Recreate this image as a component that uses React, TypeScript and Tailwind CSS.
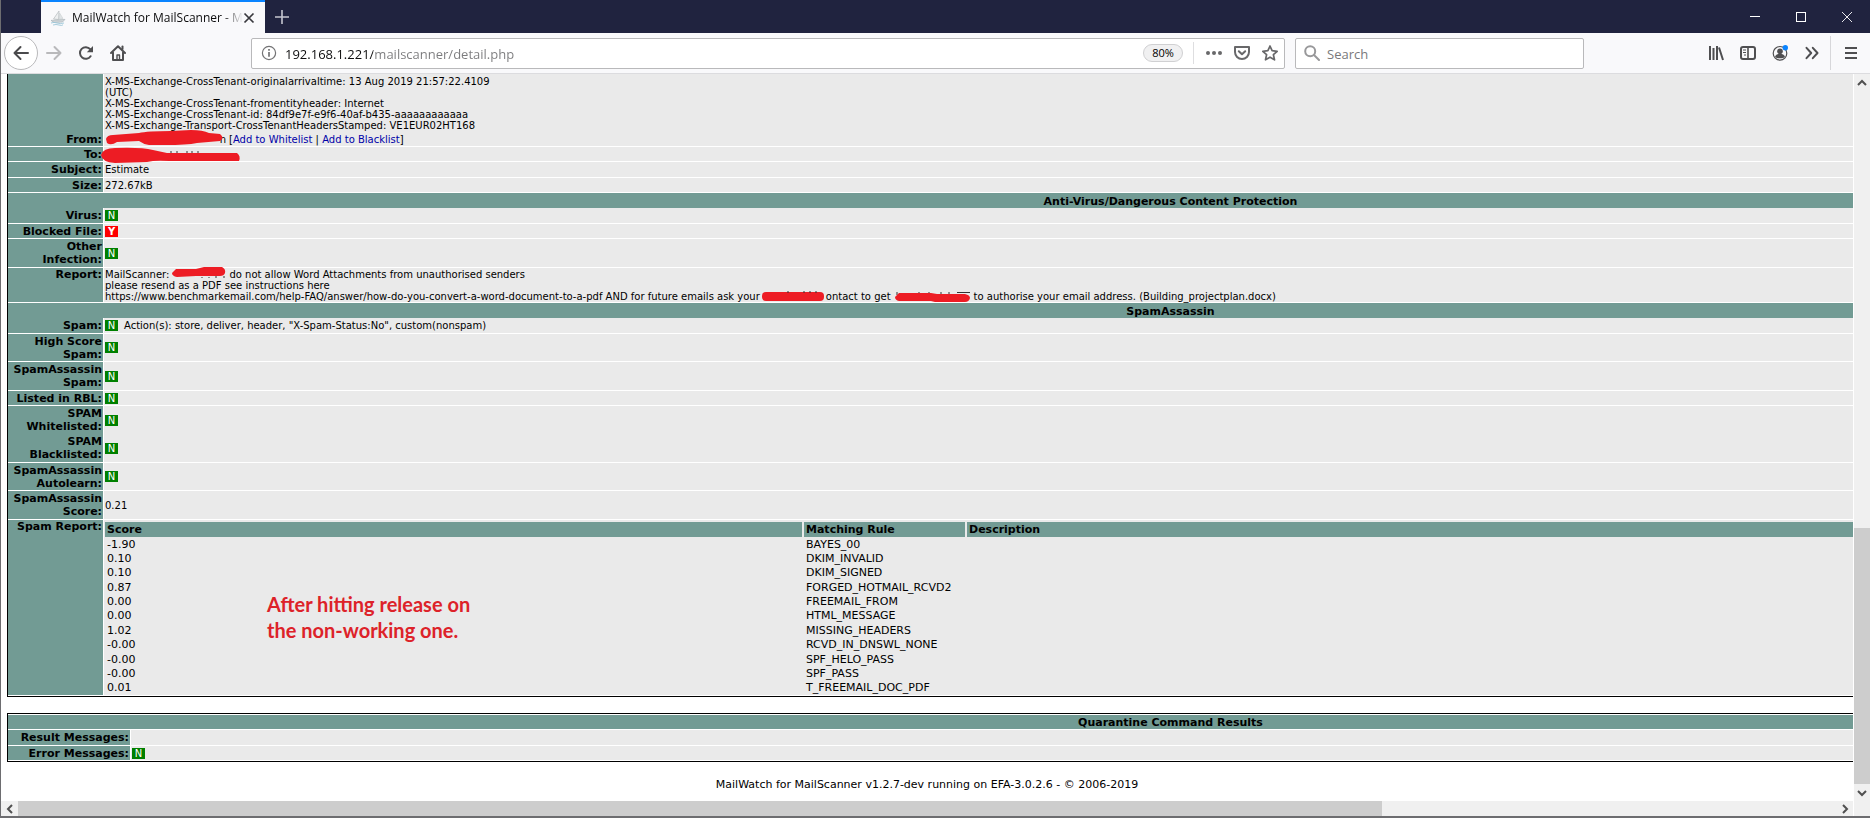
import type { ReactNode } from "react";

const reportRules = [
  ["-1.90", "BAYES_00"],
  ["0.10", "DKIM_INVALID"],
  ["0.10", "DKIM_SIGNED"],
  ["0.87", "FORGED_HOTMAIL_RCVD2"],
  ["0.00", "FREEMAIL_FROM"],
  ["0.00", "HTML_MESSAGE"],
  ["1.02", "MISSING_HEADERS"],
  ["-0.00", "RCVD_IN_DNSWL_NONE"],
  ["-0.00", "SPF_HELO_PASS"],
  ["-0.00", "SPF_PASS"],
  ["0.01", "T_FREEMAIL_DOC_PDF"],
];

function Flag({ yes = false }: { yes?: boolean }) {
  return (
    <span
      className={`inline-block h-[11px] w-[13px] text-center align-middle text-[10px] leading-[11px] text-white ${
        yes ? "bg-[#ff0000] font-bold" : "bg-[#008000]"
      }`}
    >
      {yes ? "Y" : "N"}
    </span>
  );
}

function Row({
  label,
  height,
  top = false,
  line = true,
  children,
}: {
  label: string;
  height: string;
  top?: boolean;
  line?: boolean;
  children?: ReactNode;
}) {
  const edge = line ? "border-b border-white" : "";
  return (
    <tr className={height}>
      <th
        scope="row"
        className={`bg-[#729b94] p-0 pr-px text-right text-[11px] leading-[13px] font-bold ${edge} ${top ? "align-top" : "align-middle"}`}
      >
        {label}
      </th>
      <td className={`border-l border-l-white bg-[#eaeaea] p-0 pl-px align-middle whitespace-nowrap ${edge}`}>{children}</td>
    </tr>
  );
}

function SectionRow({ title }: { title: string }) {
  return (
    <tr className="h-[15px]">
      <th colSpan={2} className="bg-[#729b94] p-0 pt-0.5 text-center text-[11px] leading-[13px] font-bold">
        {title}
      </th>
    </tr>
  );
}

function ToolButton({ label, className = "w-8", children }: { label: string; className?: string; children: ReactNode }) {
  return (
    <button type="button" aria-label={label} className={`flex h-8 shrink-0 items-center justify-center text-[#4f4f51] ${className}`}>
      {children}
    </button>
  );
}

function Chevron({ d }: { d: string }) {
  return (
    <svg viewBox="0 0 10 10" className="size-[10px] fill-none stroke-[#505050]" strokeWidth={2}>
      <path d={d} />
    </svg>
  );
}

function TabStrip() {
  return (
    <header className="flex h-[33px] items-stretch bg-[#20233f] pl-10">
      <div className="flex w-[224px] items-center border-t-2 border-[#0a84ff] bg-[#f9f9fb] pr-[10px] pl-[9px]">
        <svg viewBox="0 0 16 16" className="size-4 shrink-0" fill="none">
          <path d="M9 1 L8.5 9.5 L3.5 9 Z" fill="#eef0f1" stroke="#b4babd" strokeWidth=".7" />
          <path d="M9.6 3 L13 8.5 L9.4 9.4 Z" fill="#e0e4e6" stroke="#c3c8cb" strokeWidth=".5" />
          <path d="M1 10.4 L15 9.4 L12.5 12 L4 12.5 Z" fill="#cfd5d8" stroke="#a3adb2" strokeWidth=".6" />
          <path d="M1 13 Q4 11.8 7 13 T14 13 M3 15 Q6 14 9 15 T13 14.8" stroke="#9cc6d8" strokeWidth=".9" />
        </svg>
        <span className="ml-1.5 min-w-0 flex-1 overflow-hidden mask-r-from-88% text-[12px] leading-4 whitespace-nowrap text-[#0c0c0d]">
          MailWatch for MailScanner - M
        </span>
        <button type="button" aria-label="Close tab" className="flex size-3 items-center justify-center">
          <svg viewBox="0 0 12 12" className="size-3 fill-none stroke-[#38383d]" strokeWidth={1.7}>
            <path d="M1.5 1.5 L10.5 10.5 M10.5 1.5 L1.5 10.5" />
          </svg>
        </button>
      </div>
      <button type="button" aria-label="New tab" className="flex w-[34px] items-center justify-center">
        <svg viewBox="0 0 14 14" className="size-[14px] fill-none stroke-[#c5c6d0]" strokeWidth={1.6}>
          <path d="M7 0 V14 M0 7 H14" />
        </svg>
      </button>
      <div className="ml-auto flex">
        <button type="button" aria-label="Minimize" className="flex w-[46px] items-center justify-center">
          <svg viewBox="0 0 10 10" className="size-[10px] fill-none stroke-white" shapeRendering="crispEdges">
            <path d="M0 4.5 H10" />
          </svg>
        </button>
        <button type="button" aria-label="Maximize" className="flex w-[46px] items-center justify-center">
          <svg viewBox="0 0 10 10" className="size-[10px] fill-none stroke-white" shapeRendering="crispEdges">
            <rect x=".5" y=".5" width="9" height="9" />
          </svg>
        </button>
        <button type="button" aria-label="Close" className="flex w-[46px] items-center justify-center">
          <svg viewBox="0 0 10 10" className="size-[10px] fill-none stroke-white" strokeWidth={0.9}>
            <path d="M0 0 L10 10 M10 0 L0 10" />
          </svg>
        </button>
      </div>
    </header>
  );
}

function Toolbar() {
  return (
    <nav className="flex h-[41px] items-center border-b border-[#dcdcdf] bg-[#f9f9fb] pl-[3px]">
      <button
        type="button"
        aria-label="Back"
        className="flex size-[34px] shrink-0 items-center justify-center rounded-full border border-[#b9b9bb] bg-white"
      >
        <svg viewBox="0 0 16 16" className="size-4 fill-none stroke-[#4a4a4c]" strokeWidth={2} strokeLinecap="round" strokeLinejoin="round">
          <path d="M15 8 H1.5 M7.5 2 L1.5 8 L7.5 14" />
        </svg>
      </button>
      <ToolButton label="Forward">
        <svg viewBox="0 0 16 16" className="size-4 fill-none stroke-[#b9b9bb]" strokeWidth={2} strokeLinecap="round" strokeLinejoin="round">
          <path d="M1 8 H14.5 M8.5 2 L14.5 8 L8.5 14" />
        </svg>
      </ToolButton>
      <ToolButton label="Reload">
        <svg viewBox="0 0 16 16" className="size-4 fill-none stroke-current" strokeWidth={2}>
          <path d="M12.6 11.2 A5.8 5.8 0 1 1 12.2 4.2" strokeLinecap="round" />
          <path d="M15 1 V7.2 H8.8 Z" className="fill-current stroke-none" />
        </svg>
      </ToolButton>
      <ToolButton label="Home">
        <svg viewBox="0 0 16 16" className="size-4 fill-none stroke-current" strokeWidth={2} strokeLinejoin="round" strokeLinecap="round">
          <path d="M1 8 L8 1.2 L15 8 M3 7.5 V15 H13 V7.5" />
          <path d="M7 15 V10 H9.5 V15" strokeWidth={1.4} />
          <path d="M12.5 1.5 V4" />
        </svg>
      </ToolButton>

      <div className="ml-[117px] flex h-[31px] min-w-0 flex-1 items-center rounded-[2px] border border-[#b9b9bb] bg-white pl-[9px]">
        <svg viewBox="0 0 16 16" className="size-4 shrink-0 fill-none stroke-[#737375]" strokeWidth={1.2}>
          <circle cx="8" cy="8" r="6.6" />
          <path d="M8 7 V11.8 M8 4 V5.7" strokeWidth={1.7} />
        </svg>
        <input
          aria-label="Address"
          defaultValue="192.168.1.221/mailscanner/detail.php"
          className="mt-px ml-2 min-w-0 flex-1 bg-[linear-gradient(90deg,#0c0c0d_88px,#7b7b7d_88px)] bg-clip-text text-[13px] leading-5 text-transparent outline-none"
        />
        <button type="button" className="h-[18px] w-[40px] rounded-full border border-[#d0d0d2] bg-[#f0f0f1] text-[11px] leading-4 text-black">
          80%
        </button>
        <span className="ml-[10px] h-[22px] w-px bg-[#dedee0]" />
        <ToolButton label="Page actions" className="ml-[6px] w-7">
          <svg viewBox="0 0 16 16" className="size-4 fill-[#68686a]">
            <circle cx="2" cy="8" r="2" />
            <circle cx="8" cy="8" r="2" />
            <circle cx="14" cy="8" r="2" />
          </svg>
        </ToolButton>
        <ToolButton label="Save to Pocket" className="w-7">
          <svg viewBox="0 0 16 16" className="size-4 fill-none stroke-[#68686a]" strokeWidth={2} strokeLinejoin="round" strokeLinecap="round">
            <path d="M1 2 H15 V7 A7 7 0 0 1 1 7 Z" />
            <path d="M4.8 6.2 L8 9.3 L11.2 6.2" />
          </svg>
        </ToolButton>
        <ToolButton label="Bookmark" className="w-7">
          <svg viewBox="0 0 16 16" className="size-4 fill-none stroke-[#68686a]" strokeWidth={1.7} strokeLinejoin="round">
            <path d="M8 1 L10.1 5.7 L15.2 6.3 L11.4 9.7 L12.5 14.8 L8 12.2 L3.5 14.8 L4.6 9.7 L.8 6.3 L5.9 5.7 Z" />
          </svg>
        </ToolButton>
      </div>

      <label className="ml-[10px] flex h-[31px] w-[289px] items-center rounded-[2px] border border-[#b9b9bb] bg-white pl-2">
        <svg viewBox="0 0 16 16" className="size-4 shrink-0 fill-none stroke-[#98989a]" strokeWidth={2} strokeLinecap="round">
          <circle cx="6.2" cy="6.2" r="5" />
          <path d="M10 10 L15 15" />
        </svg>
        <input aria-label="Search" placeholder="Search" className="mt-px ml-[7px] w-full text-[13px] leading-5 outline-none placeholder:text-[#79797b]" />
      </label>

      <div className="ml-[116px] flex items-center">
        <ToolButton label="Library">
          <svg viewBox="0 0 16 16" className="size-4 fill-none stroke-current" strokeWidth={2}>
            <path d="M2 1 V15 M5.5 3 V15 M9 1 V15 M11 2.5 L15 15" />
          </svg>
        </ToolButton>
        <ToolButton label="Sidebars">
          <svg viewBox="0 0 16 16" className="size-4 fill-none stroke-current" strokeWidth={2}>
            <rect x="1" y="2" width="14" height="12" rx="2" />
            <path d="M8 2 V14" strokeWidth={1.6} />
            <path d="M3 5 H6 M3 7.5 H6 M4 10 H6" strokeWidth={1} />
          </svg>
        </ToolButton>
        <ToolButton label="Account">
          <svg viewBox="0 0 16 16" className="size-4 fill-none stroke-current" strokeWidth={1.2}>
            <circle cx="8" cy="8.3" r="6.8" />
            <circle cx="8" cy="6.2" r="2.8" className="fill-current stroke-none" />
            <path d="M3 12 C3.6 9.4 5.5 9 8 9 S12.4 9.4 13 12 C11.5 13.8 4.5 13.8 3 12 Z" className="fill-current stroke-none" />
            <circle cx="13.3" cy="2.7" r="2.7" className="fill-[#0a84ff] stroke-none" />
          </svg>
        </ToolButton>
        <ToolButton label="More tools">
          <svg viewBox="0 0 16 16" className="size-4 fill-none stroke-current" strokeWidth={2} strokeLinecap="round" strokeLinejoin="round">
            <path d="M2.5 2.8 L7.2 8 L2.5 13.2 M8.8 2.8 L13.5 8 L8.8 13.2" />
          </svg>
        </ToolButton>
        <span className="ml-[2px] h-[34px] w-px bg-[#d7d7da]" />
        <ToolButton label="Menu" className="w-[39px]">
          <svg viewBox="0 0 14 14" className="size-[14px] fill-none stroke-current" strokeWidth={2}>
            <path d="M1 2 H13 M1 7 H13 M1 12 H13" />
          </svg>
        </ToolButton>
      </div>
    </nav>
  );
}

function MessageDetail() {
  return (
    <table className="w-[126%] table-fixed border-separate border-spacing-0 border-b border-l border-black text-[10px] leading-[11px]">
      <colgroup>
        <col className="w-[95px]" />
        <col />
      </colgroup>
      <tbody>
        <Row label="" height="h-[58px]" line={false}>
          X-MS-Exchange-CrossTenant-originalarrivaltime: 13 Aug 2019 21:57:22.4109
          <br />
          (UTC)
          <br />
          X-MS-Exchange-CrossTenant-fromentityheader: Internet
          <br />
          X-MS-Exchange-CrossTenant-id: 84df9e7f-e9f6-40af-b435-aaaaaaaaaaaa
          <br />
          X-MS-Exchange-Transport-CrossTenantHeadersStamped: VE1EUR02HT168
        </Row>
        <Row label="From:" height="h-[15px]">
          <span className="relative inline-block h-[11px] w-[121px] text-right align-top">
            n
            <svg viewBox="0 0 120 16" className="absolute -top-1 left-0 h-4 w-[120px] fill-[#ed1c24]">
              <path d="M1 9 Q2 5 8 5 L34 3 Q42 1 66 1 L86 0 Q98 0 104 3 L115 4 Q120 8 115 11 L92 13 Q82 15 60 15 L44 15 Q38 14 34 11 L12 12 Q6 16 2 13 Z" />
            </svg>
          </span>
          <span className="ml-[3px]">
            [
            <a href="#whitelist" className="text-[#0000a8]">
              Add to Whitelist
            </a>
            {" | "}
            <a href="#blacklist" className="text-[#0000a8]">
              Add to Blacklist
            </a>
            ]
          </span>
        </Row>
        <Row label="To:" height="h-[15px]">
          <span className="relative block h-[11px]">
            <svg viewBox="0 0 140 17" className="absolute -top-0.5 -left-1 h-[17px] w-[140px] fill-[#ed1c24]">
              <path d="M0 8 Q2 1 14 1 Q40 0 52 3 L66 6 L136 6 Q140 9 138 14 L68 14 Q54 13 46 15 L14 16 Q1 15 0 8 Z" />
              <path d="M70 4 V6 M76 4 V6 M86 4 V6 M91 4 V6 M97 4 V6" stroke="#333" />
            </svg>
          </span>
        </Row>
        <Row label="Subject:" height="h-[16px]">Estimate</Row>
        <Row label="Size:" height="h-[15px]">272.67kB</Row>
        <SectionRow title="Anti-Virus/Dangerous Content Protection" />
        <Row label="Virus:" height="h-[16px]">
          <Flag />
        </Row>
        <Row label="Blocked File:" height="h-[15px]">
          <Flag yes />
        </Row>
        <Row label="Other Infection:" height="h-[29px]">
          <Flag />
        </Row>
        <Row label="Report:" height="h-[35px]" top>
          MailScanner:
          <span className="relative mx-[3px] inline-block h-[11px] w-[54px] align-top">
            <svg viewBox="0 0 54 11" className="absolute -top-0.5 left-0 h-[11px] w-[54px] fill-[#ed1c24]">
              <path d="M4 2 L24 2 L32 0 L50 0 Q54 2 53 6 Q52 9 48 9 L24 9 L5 10 Q0 9 0 6 Z" />
              <path d="M30 10 V11 M37 10 V11 M44 9 V11 M52 9 V11" stroke="#333" />
            </svg>
          </span>
          do not allow Word Attachments from unauthorised senders
          <br />
          please resend as a PDF see instructions here
          <br />
          https://www.benchmarkemail.com/help-FAQ/answer/how-do-you-convert-a-word-document-to-a-pdf AND for future emails ask your
          <span className="relative mx-0.5 inline-block h-[11px] w-[62px] align-top">
            <svg viewBox="0 0 62 11" className="absolute top-0 left-0 h-[11px] w-[62px] fill-[#ed1c24]">
              <rect x="0" y="1" width="62" height="9" rx="4" />
              <path d="M26 0 V2 M42 0 V2 M48 0 V2 M54 0 V2" stroke="#333" />
            </svg>
          </span>
          ontact to get
          <span className="relative mx-1 inline-block h-[11px] w-[75px] align-top">
            <svg viewBox="0 0 75 11" className="absolute top-0 left-0 h-[11px] w-[75px] fill-[#ed1c24]">
              <path d="M2 1 V4 M24 1 V4 M34 1 V4 M46 1 V4 M54 1 V4 M62 1.5 H75" stroke="#333" />
              <path d="M4 2 L36 2 L42 3 L70 3 Q75 4 75 7 Q74 11 70 11 L40 11 L36 10 L4 10 Q0 9 0 6 Z" />
            </svg>
          </span>
          to authorise your email address. (Building_projectplan.docx)
        </Row>
        <SectionRow title="SpamAssassin" />
        <Row label="Spam:" height="h-[16px]">
          <Flag />
          <span className="ml-1.5">Action(s): store, deliver, header, "X-Spam-Status:No", custom(nonspam)</span>
        </Row>
        <Row label="High Score Spam:" height="h-[28px]">
          <Flag />
        </Row>
        <Row label="SpamAssassin Spam:" height="h-[29px]">
          <Flag />
        </Row>
        <Row label="Listed in RBL:" height="h-[15px]">
          <Flag />
        </Row>
        <Row label="SPAM Whitelisted:" height="h-[28px]" line={false}>
          <Flag />
        </Row>
        <Row label="SPAM Blacklisted:" height="h-[29px]">
          <Flag />
        </Row>
        <Row label="SpamAssassin Autolearn:" height="h-[28px]">
          <Flag />
        </Row>
        <Row label="SpamAssassin Score:" height="h-[29px]">0.21</Row>
        <Row label="Spam Report:" height="h-[176px]" top>
          <div className="relative pt-0.5">
            <table className="h-[173px] w-full border-separate border-spacing-0 text-[11px]">
              <thead>
                <tr className="h-[15px] bg-[#729b94] text-left leading-[13px]">
                  <th className="w-[699px] border-r-2 border-[#eaeaea] p-0 pl-0.5">Score</th>
                  <th className="w-[163px] border-r-2 border-[#eaeaea] p-0 pl-0.5">Matching Rule</th>
                  <th className="p-0 pl-0.5">Description</th>
                </tr>
              </thead>
              <tbody>
                {reportRules.map(([score, rule]) => (
                  <tr key={rule}>
                    <td className="p-0 pl-0.5">{score}</td>
                    <td className="p-0 pl-0.5">{rule}</td>
                    <td className="p-0" />
                  </tr>
                ))}
              </tbody>
            </table>
            {/* note written over the report */}
            <p className="absolute top-[71px] left-[162px] font-[Lato,sans-serif] text-[20px] leading-[26px] font-bold text-[#dd2229]">
              After hitting release on
              <br />
              the non-working one.
            </p>
          </div>
        </Row>
      </tbody>
    </table>
  );
}

function QuarantineResults() {
  return (
    <table className="mt-4 w-[126%] table-fixed border-separate border-spacing-0 border-y border-l border-black pt-px text-[10px] leading-[11px]">
      <colgroup>
        <col className="w-[122px]" />
        <col />
      </colgroup>
      <thead>
        <tr className="h-[15px]">
          <th colSpan={2} className="border-b border-white bg-[#729b94] p-0 pt-px text-center text-[11px] leading-[13px] font-bold">
            Quarantine Command Results
          </th>
        </tr>
      </thead>
      <tbody>
        <Row label="Result Messages:" height="h-[16px]" />
        <Row label="Error Messages:" height="h-[15px]">
          <Flag />
        </Row>
      </tbody>
    </table>
  );
}

export default function App() {
  return (
    <div className="flex h-screen flex-col overflow-hidden border-b-2 border-l border-[#6d6d70] bg-white font-['Open_Sans',sans-serif] text-black">
      <TabStrip />
      <Toolbar />
      <div className="flex min-h-0 flex-1">
        <div className="flex min-w-0 flex-1 flex-col">
          <main className="min-h-0 flex-1 overflow-hidden pl-1.5 font-[Verdana,'DejaVu_Sans',sans-serif]">
            <MessageDetail />
            <QuarantineResults />
            <footer className="mt-4 pr-1.5 text-center text-[11px] leading-[13px]">
              MailWatch for MailScanner v1.2.7-dev running on EFA-3.0.2.6 - © 2006-2019
            </footer>
          </main>
          <div className="flex h-[15px] items-center bg-[#f0f0f0]">
            <span className="flex w-[17px] justify-center">
              <Chevron d="M7 1 L3 5 L7 9" />
            </span>
            <div className="flex h-full flex-1">
              <div className="w-3/4 bg-[#cdcdcd]" />
            </div>
            <span className="flex w-[17px] justify-center">
              <Chevron d="M3 1 L7 5 L3 9" />
            </span>
          </div>
        </div>
        <div className="flex w-[17px] flex-col items-center border-l border-white bg-[#f0f0f0] pb-[15px]">
          <span className="flex h-[17px] items-center">
            <Chevron d="M1 7 L5 3 L9 7" />
          </span>
          <div className="flex w-full flex-1 flex-col justify-end">
            <div className="h-[37%] bg-[#cdcdcd]" />
          </div>
          <span className="flex h-[17px] items-center">
            <Chevron d="M1 3 L5 7 L9 3" />
          </span>
        </div>
      </div>
    </div>
  );
}
